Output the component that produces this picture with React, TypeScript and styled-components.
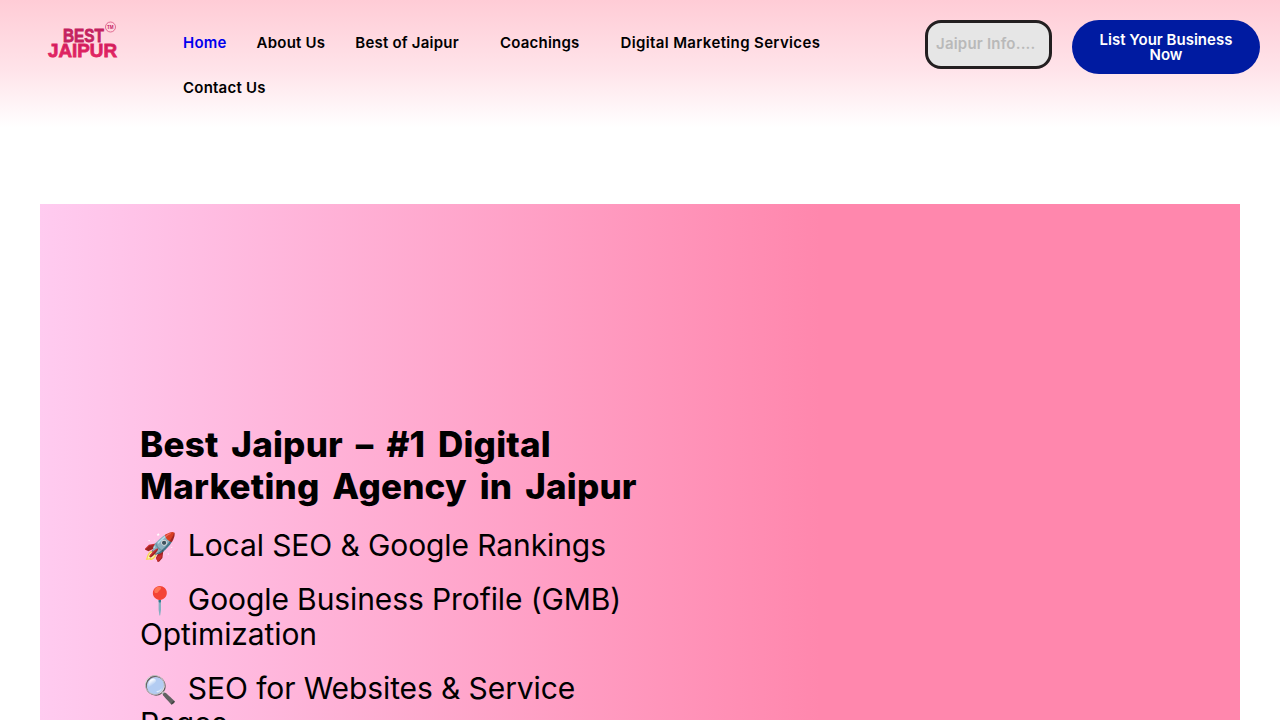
import React from "react";
import styled, { createGlobalStyle } from "styled-components";

const Global = createGlobalStyle`
  html, body { margin: 0; padding: 0; background: #fff; overflow: hidden; height: 720px; }
  #root { height: 720px; overflow: hidden; }
`;

const Header = styled.header`
  height: 130px;
  box-sizing: border-box;
  background: linear-gradient(180deg, #ffccd6 0%, #ffe4ea 55%, #ffffff 98%);
  display: flex;
  align-items: flex-start;
  padding: 20px 20px 0 40px;
`;

const LogoBox = styled.div`
  width: 127px;
  flex: none;
`;

const Nav = styled.nav`
  width: 700px;
  flex: none;
  display: flex;
  flex-wrap: wrap;
  margin-left: 1px;
`;

const NavItem = styled.a<{ $active?: boolean; $caret?: boolean; $wide?: boolean }>`
  font: 600 15px/45px "Inter", "Liberation Sans", sans-serif;
  letter-spacing: ${(p) => (p.$wide ? 0.36 : 0.22)}px;
  color: ${(p) => (p.$active ? "#0000ee" : "#000")};
  padding: 0 ${(p) => (p.$caret ? 26 : 15)}px 0 15px;
  white-space: nowrap;
`;

const Actions = styled.div`
  margin-left: auto;
  display: flex;
  align-items: flex-start;
  gap: 20px;
`;

const Search = styled.div`
  width: 127px;
  height: 49px;
  box-sizing: border-box;
  border: 3px solid #231f20;
  border-radius: 16px;
  background: #e6e6e6;
  color: #b9b9b9;
  font: 600 15px/41px "Inter", "Liberation Sans", sans-serif;
  letter-spacing: 0.2px;
  padding-left: 8px;
  white-space: nowrap;
`;

const Cta = styled.a`
  width: 188px;
  height: 54px;
  box-sizing: border-box;
  border-radius: 27px;
  background: #001ba1;
  color: #fff;
  font: 600 15px/15px "Inter", "Liberation Sans", sans-serif;
  display: flex;
  align-items: center;
  justify-content: center;
  text-align: center;
  padding: 0 20px;
`;

const Main = styled.main`
  padding: 74px 40px 0;
`;

const Hero = styled.section`
  height: 620px;
  background: linear-gradient(90deg, #ffcbf0 0%, #ff87ad 65%, #ff87ad 100%);
  padding: 219px 0 0 100px;
  box-sizing: border-box;
`;

const HeroCopy = styled.div`
  width: 500px;
  color: #000;
`;

const Title = styled.h1`
  margin: 0 0 21px;
  font: 800 35px/42px "Inter", "Liberation Sans", sans-serif;
  letter-spacing: 0.2px;
  word-spacing: 5px;
`;

const Point = styled.p`
  margin: 0 0 19px;
  font: 400 30px/35px "Inter", "Liberation Sans", sans-serif;
  letter-spacing: -0.1px;
`;

const Emoji = styled.span`
  font: 400 27px/0 "Noto Color Emoji", sans-serif;
  margin: 0 3px 0 3px;
`;

const LogoMark = () => (
  <svg width="80" height="48" viewBox="0 0 80 48" role="img" aria-label="Best Jaipur logo">
    <defs>
      <linearGradient id="lg" x1="0" y1="0" x2="0" y2="1">
        <stop offset="0" stopColor="#c2185b" />
        <stop offset="1" stopColor="#ee2a6b" />
      </linearGradient>
    </defs>
    <text x="23" y="22" fontFamily="Liberation Sans" fontWeight="700" fontSize="19" fill="#c4225f" stroke="#c4225f" strokeWidth="0.8" textLength="41" lengthAdjust="spacingAndGlyphs">BEST</text>
    <text x="8" y="37" fontFamily="Liberation Sans" fontWeight="700" fontSize="19" fill="url(#lg)" stroke="#e0265f" strokeWidth="0.8" textLength="69" lengthAdjust="spacingAndGlyphs">JAIPUR</text>
    <circle cx="70.5" cy="7" r="5" fill="none" stroke="#d8527f" strokeWidth="0.8" />
    <text x="67" y="8.8" fontFamily="Liberation Sans" fontWeight="700" fontSize="4.5" fill="#c4225f">TM</text>
  </svg>
);

export default function App() {
  return (
    <>
      <Global />
      <Header>
        <LogoBox><LogoMark /></LogoBox>
        <Nav>
          <NavItem $active>Home</NavItem>
          <NavItem>About Us</NavItem>
          <NavItem $caret>Best of Jaipur</NavItem>
          <NavItem $caret>Coachings</NavItem>
          <NavItem $wide>Digital Marketing Services</NavItem>
          <NavItem>Contact Us</NavItem>
        </Nav>
        <Actions>
          <Search>Jaipur Info....</Search>
          <Cta>List Your Business Now</Cta>
        </Actions>
      </Header>
      <Main>
        <Hero>
          <HeroCopy>
            <Title>Best Jaipur – #1 Digital Marketing Agency in Jaipur</Title>
            <Point><Emoji>🚀</Emoji> Local SEO &amp; Google Rankings</Point>
            <Point><Emoji>📍</Emoji> Google Business Profile (GMB) Optimization</Point>
            <Point><Emoji>🔍</Emoji> SEO for Websites &amp; Service Pages</Point>
          </HeroCopy>
        </Hero>
      </Main>
    </>
  );
}
